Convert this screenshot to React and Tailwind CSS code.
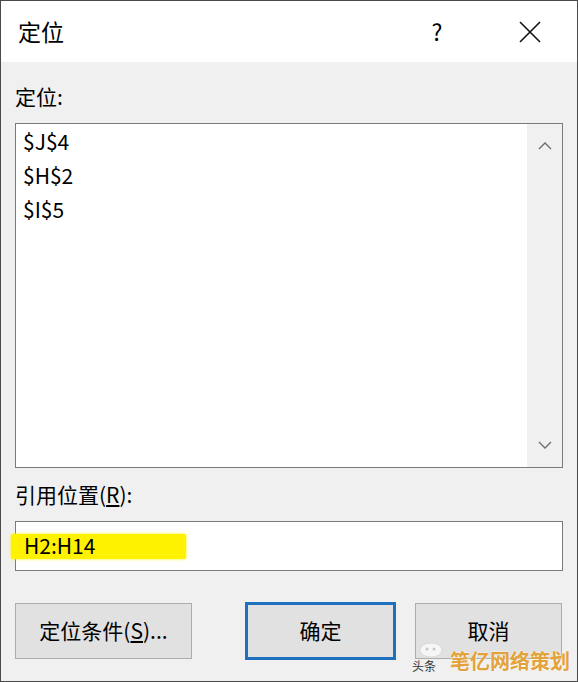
import React from 'react';

const font = { fontFamily: '"Noto Sans CJK SC", "Noto Sans", sans-serif' };

const cells = ['$J$4', '$H$2', '$I$5'];

const ScrollArrow = ({ up }) => (
  <svg width="16" height="10" viewBox="0 0 16 10" fill="none" stroke="#6b6b6b" strokeWidth="1.3">
    {up ? <path d="M2 8 L8 2 L14 8" /> : <path d="M2 2 L8 8 L14 2" />}
  </svg>
);

const App = () => {
  return (
    <div
      className="w-[578px] h-[682px] border border-[#4a4a4a] bg-[#f0f0f0] flex flex-col relative overflow-hidden text-black"
      style={font}
    >
      {/* Title bar */}
      <div className="h-[61px] bg-white flex items-center shrink-0">
        <span className="ml-[17px] text-[23px]">定位</span>
        <span className="ml-auto text-[23px] w-[20px] text-center mr-[72px]">?</span>
        <svg className="mr-[36px]" width="22" height="22" viewBox="0 0 22 22" stroke="#111" strokeWidth="1.6">
          <path d="M1 1 L21 21 M21 1 L1 21" />
        </svg>
      </div>

      <div className="px-[14px] flex flex-col">
        <div className="h-[61px] pt-[9px] flex items-center text-[21px]">定位:</div>

        {/* List box */}
        <div className="h-[345px] border border-[#7a7a7a] bg-white flex">
          <div className="flex-1 pt-[1px] pl-[7px] flex flex-col">
            {cells.map((c) => (
              <div key={c} className="h-[34px] flex items-center text-[21px]">{c}</div>
            ))}
          </div>
          <div className="w-[35px] bg-[#f0f0f0] flex flex-col items-center justify-between py-[17px]">
            <ScrollArrow up />
            <ScrollArrow />
          </div>
        </div>

        <div className="h-[53px] flex items-center text-[21px]">
          引用位置(<span className="underline underline-offset-2">R</span>):
        </div>

        {/* Reference input */}
        <div className="h-[50px] border border-[#7a7a7a] bg-white relative flex items-center">
          <span className="absolute left-[-5px] top-[12px] w-[175px] h-[25px] bg-[#fff200] rounded-[2px] shadow-[0_0_3px_#fff200]" />
          <span className="relative ml-[8px] text-[21px]">H2:H14</span>
        </div>

        {/* Buttons */}
        <div className="flex mt-[32px] h-[56px]">
          <button className="w-[177px] h-[56px] bg-[#e1e1e1] border border-[#adadad] text-[21px]">
            定位条件(<span className="underline underline-offset-2">S</span>)...
          </button>
          <button className="ml-[53px] w-[151px] h-[58px] -mt-[1px] bg-[#e1e1e1] border-[3px] border-[#1f6fbf] text-[21px]">
            确定
          </button>
          <button className="ml-[19px] w-[147px] h-[56px] bg-[#e1e1e1] border border-[#adadad] text-[21px]">
            取消
          </button>
        </div>
      </div>

      {/* Watermark */}
      <div className="absolute left-[411px] top-[640px] flex items-end whitespace-nowrap">
        <div className="flex flex-col items-start">
          <svg width="28" height="18" viewBox="0 0 28 18" className="ml-[6px] opacity-70">
            <ellipse cx="13" cy="9" rx="11" ry="7" fill="#ffffff" stroke="#d9d9d9" />
            <circle cx="9" cy="8" r="1.5" fill="#bbb" />
            <circle cx="16" cy="8" r="1.5" fill="#bbb" />
          </svg>
          <span className="text-[12px] leading-[14px] text-[#333]">头条</span>
        </div>
        <span className="ml-[4px] text-[20px] leading-[24px] font-bold text-[#e3a23a] [text-shadow:0_0_2px_#fff]">
          笔亿网络策划
        </span>
      </div>
    </div>
  );
};

export default App;
